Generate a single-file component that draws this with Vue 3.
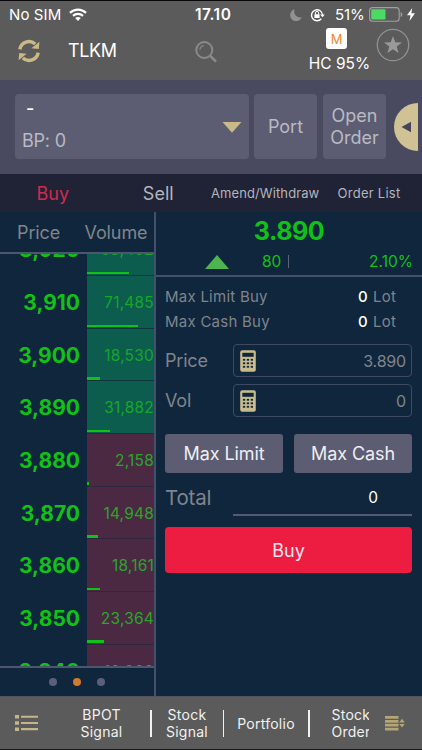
<template>
  <div class="app">
    <header class="top">
      <div class="status-bar">
        <span class="carrier">No SIM</span>
        <svg class="wifi" width="18" height="13" viewBox="0 0 18 13">
          <g fill="none" stroke="#fff" stroke-width="2.2">
            <path d="M1 4.9C5.5 .6 12.5 .6 17 4.9" />
            <path d="M4 7.9C6.8 5.2 11.2 5.2 14 7.9" />
          </g>
          <path d="M6.2 10.1C7.8 8.6 10.2 8.6 11.8 10.1L9 12.9Z" fill="#fff" />
        </svg>
        <span class="clock">17.10</span>
        <svg class="moon" width="12" height="12" viewBox="0 0 12 12">
          <path d="M4.6 .3A6 6 0 1 0 11.8 8.2A6 6 0 0 1 4.6 .3Z" fill="#929294" />
        </svg>
        <svg class="lock" width="15" height="14" viewBox="0 0 15 14">
          <path d="M11.3 10.7A5.5 5.5 0 1 1 12.5 7" fill="none" stroke="#fff" stroke-width="1.4" />
          <path d="M10.2 6.4H14.8L12.5 9.3Z" fill="#fff" />
          <rect x="4.4" y="6.2" width="5.2" height="3.8" rx=".5" fill="#fff" />
          <path d="M5.4 6.5V5A1.6 1.6 0 0 1 8.6 5V6.5" fill="none" stroke="#fff" />
        </svg>
        <span class="percent">51%</span>
        <svg class="battery" width="34" height="15" viewBox="0 0 34 15">
          <rect x=".6" y=".6" width="29.6" height="13.6" rx="3" fill="none" stroke="#a0a0a1" stroke-width="1.1" />
          <rect x="2.2" y="2.2" width="14.3" height="10.4" rx="1" fill="#4cd964" />
          <path d="M31.7 5V10Q33.4 9.5 33.4 7.5T31.7 5Z" fill="#a0a0a1" />
        </svg>
        <svg class="bolt" width="8" height="13" viewBox="0 0 8 13">
          <path d="M5.2 0L0 7.3H3.5L2.5 13L8 5.3H4.4Z" fill="#fff" />
        </svg>
      </div>

      <div class="toolbar">
        <svg class="refresh" width="24" height="24" viewBox="0 0 24 24">
          <g fill="none" stroke="#c8b987" stroke-width="3.4">
            <path d="M2.8 10.4A9.3 9.3 0 0 1 18.2 5" />
            <path d="M21.2 13.6A9.3 9.3 0 0 1 5.8 19" />
          </g>
          <path d="M22.4 2.8L21.8 10L14.4 9.2ZM1.6 21.2L2.2 14L9.6 14.8Z" fill="#c8b987" />
        </svg>
        <span class="ticker">TLKM</span>
        <svg class="search" width="24" height="24" viewBox="0 0 24 24">
          <circle cx="9.3" cy="9" r="8" fill="none" stroke="#8a8a8a" stroke-width="2" />
          <path d="M4.9 8.7A4.6 4.6 0 0 1 9 4.6" fill="none" stroke="#8a8a8a" stroke-width="1.3" />
          <path d="M15.3 15L21 20.6" stroke="#8a8a8a" stroke-width="2.6" />
        </svg>
        <div class="margin-info">
          <span class="badge">M</span>
          <span class="haircut">HC 95%</span>
        </div>
        <svg class="star" width="34" height="34" viewBox="0 0 34 34">
          <circle cx="17" cy="17" r="15.7" fill="none" stroke="#929292" stroke-width="1.3" />
          <path
            d="M17 8L19.3 14.3L26 14.5L20.7 18.6L22.6 25.1L17 21.3L11.4 25.1L13.3 18.6L8 14.5L14.7 14.3Z"
            fill="#999"
          />
        </svg>
      </div>
    </header>

    <section class="account">
      <div class="account-select">
        <span class="account-name">-</span>
        <span class="account-bp">BP: 0</span>
        <svg class="caret" width="20" height="11" viewBox="0 0 20 11">
          <path d="M.5 0H19.5L10 10.8Z" fill="#c8b987" />
        </svg>
      </div>
      <button class="account-btn">Port</button>
      <button class="account-btn">Open<br />Order</button>
      <svg class="drawer" width="24" height="48" viewBox="0 0 24 48">
        <path d="M24 0A24 24 0 0 0 24 48Z" fill="#d0c294" />
        <path d="M7.5 24L17 18.7V29.3Z" fill="#45465b" />
      </svg>
    </section>

    <nav class="tabs">
      <button
        v-for="tab in tabs"
        :key="tab.name"
        class="tab"
        :class="[tab.cls, { active: tab.name === activeTab }]"
        @click="activeTab = tab.name"
      >
        {{ tab.name }}
      </button>
    </nav>

    <main class="content">
      <section class="book">
        <div class="book-head">
          <span class="head-price">Price</span>
          <span class="head-volume">Volume</span>
        </div>
        <div class="book-list">
          <div v-for="row in rows" :key="row.price" class="book-row">
            <span class="row-price">{{ row.price }}</span>
            <div class="row-volume" :class="row.side">
              <span>{{ row.volume }}</span>
              <i class="bar" :style="{ width: row.bar + 'px' }"></i>
            </div>
          </div>
        </div>
        <div class="dots"><i></i><i class="on"></i><i></i></div>
      </section>

      <section class="order">
        <div class="quote">
          <div class="last">3.890</div>
          <div class="change">
            <svg class="up" width="24" height="14" viewBox="0 0 24 14">
              <path d="M12 0L24 14H0Z" fill="#4db452" />
            </svg>
            <span class="diff">80</span>
            <i class="sep"></i>
            <span class="pct">2.10%</span>
          </div>
        </div>

        <div class="form">
          <div v-for="l in limits" :key="l" class="limit">
            <span class="limit-label">{{ l }}</span>
            <span class="limit-value">0</span>
            <span class="limit-unit">Lot</span>
          </div>

          <div v-for="f in fields" :key="f.label" class="field">
            <label>{{ f.label }}</label>
            <div class="input">
              <svg width="16" height="22" viewBox="0 0 16 22">
                <rect x=".2" y=".3" width="15.6" height="21.4" rx="2" fill="#c8bc8c" />
                <rect x="2.3" y="2.8" width="11.4" height="4" fill="#10263d" />
                <g fill="#10263d">
                  <template v-for="y in 3" :key="y">
                    <rect
                      v-for="x in 3"
                      :key="x"
                      :x="x * 3.9 - 1"
                      :y="y * 3.5 + 5.4"
                      width="2.3"
                      height="1.8"
                    />
                  </template>
                </g>
              </svg>
              <span>{{ f.value }}</span>
            </div>
          </div>

          <div class="max-buttons">
            <button>Max Limit</button>
            <button>Max Cash</button>
          </div>

          <div class="total">
            <label>Total</label>
            <span>0</span>
          </div>

          <button class="buy">Buy</button>
        </div>
      </section>
    </main>

    <footer class="bottom">
      <svg class="menu" width="23" height="16" viewBox="0 0 23 16">
        <g fill="#c3b58c">
          <path d="M0 0H4V3.5H0ZM0 6.2H4V9.7H0ZM0 12.4H4V15.9H0Z" />
          <path d="M6 .7H23V2.8H6ZM6 6.9H23V9H6ZM6 13.1H23V15.2H6Z" />
        </g>
      </svg>
      <div class="links">
        <span class="link bpot">BPOT<br />Signal</span>
        <i class="divider"></i>
        <span class="link stock">Stock<br />Signal</span>
        <i class="divider"></i>
        <span class="link portfolio">Portfolio</span>
        <i class="divider"></i>
        <span class="link orders">Stock<br />Order</span>
      </div>
      <svg class="sort" width="20" height="15" viewBox="0 0 20 15">
        <path
          d="M0 0H13.5V2.8H0ZM0 3.9H13.5V6.7H0ZM0 7.8H13.5V10.6H0ZM0 11.7H13.5V14.5H0ZM14.2 6.4L17 2.8L19.8 6.4ZM14.2 8H19.8L17 11.6Z"
          fill="#b3a577"
        />
      </svg>
    </footer>
  </div>
</template>

<script setup>
import { ref } from "vue";

const activeTab = ref("Buy");

const tabs = [
  { name: "Buy", cls: "large" },
  { name: "Sell", cls: "large" },
  { name: "Amend/Withdraw", cls: "amend" },
  { name: "Order List", cls: "list" },
];

// order book, bar = width of the volume bar in px
const rows = [
  { price: "3,920", volume: "58,402", side: "ask", bar: 42 },
  { price: "3,910", volume: "71,485", side: "ask", bar: 50.5 },
  { price: "3,900", volume: "18,530", side: "ask", bar: 13 },
  { price: "3,890", volume: "31,882", side: "ask", bar: 22.5 },
  { price: "3,880", volume: "2,158", side: "bid", bar: 2 },
  { price: "3,870", volume: "14,948", side: "bid", bar: 11 },
  { price: "3,860", volume: "18,161", side: "bid", bar: 13 },
  { price: "3,850", volume: "23,364", side: "bid", bar: 16.5 },
  { price: "3,840", volume: "10,969", side: "bid", bar: 8 },
];

const limits = ["Max Limit Buy", "Max Cash Buy"];

const fields = [
  { label: "Price", value: "3.890" },
  { label: "Vol", value: "0" },
];
</script>

<style>
body {
  margin: 0;
  background: #10263d;
}
</style>

<style scoped>
* {
  box-sizing: border-box;
}
button {
  border: none;
  padding: 0;
  font-family: inherit;
  cursor: pointer;
}
svg {
  display: block;
  flex: none;
}
.app {
  width: 422px;
  height: 750px;
  display: flex;
  flex-direction: column;
  overflow: hidden;
  font-family: Inter, "Liberation Sans", sans-serif;
  background: #10263d;
  white-space: nowrap;
}

/* header */
.top {
  height: 80px;
  flex: none;
  background: #5b5b5b;
  border-top: 1px solid #080808;
  color: #fff;
}
.status-bar {
  height: 27px;
  display: flex;
  align-items: center;
  padding-left: 9px;
  font-size: 15px;
}
.carrier {
  width: 60px;
  letter-spacing: 0.1px;
}
.clock {
  width: 95px;
  margin-left: 108px;
  font-weight: 600;
  font-size: 15.5px;
  letter-spacing: 0.5px;
}
.lock {
  margin-left: 8px;
}
.percent {
  width: 34px;
  margin-left: 10px;
  letter-spacing: -0.1px;
}
.bolt {
  margin-left: 4px;
}
.toolbar {
  height: 52px;
  display: flex;
  align-items: flex-start;
  padding-left: 17px;
}
.refresh {
  margin-top: 11px;
}
.ticker {
  width: 127px;
  margin: 12px 0 0 27px;
  font-size: 18px;
  line-height: 22px;
  letter-spacing: -0.4px;
}
.search {
  margin-top: 13px;
}
.margin-info {
  width: 64px;
  margin-left: 88.5px;
  display: flex;
  flex-direction: column;
  align-items: center;
}
.badge {
  width: 21px;
  height: 21px;
  margin-left: -6px;
  border-radius: 3px;
  background: #fff;
  color: #f08a35;
  font-size: 13px;
  line-height: 22px;
  text-align: center;
}
.haircut {
  margin-top: 5px;
  font-size: 15.5px;
  line-height: 19px;
}
.star {
  margin-left: 4px;
}

/* account */
.account {
  height: 94px;
  flex: none;
  display: flex;
  padding: 14px 0 0 15px;
  background: #494a60;
  color: #b9bac3;
}
.account-select {
  width: 234px;
  height: 65px;
  position: relative;
  display: flex;
  flex-direction: column;
  padding: 4px 0 0 7px;
  border-radius: 4px;
  background: #5c5d72;
}
.account-name {
  padding-left: 4px;
  color: #fff;
  font-size: 18px;
  font-weight: 500;
  line-height: 21px;
}
.account-bp {
  margin-top: 11px;
  font-size: 18px;
  line-height: 22px;
  letter-spacing: -0.2px;
}
.caret {
  position: absolute;
  right: 7px;
  top: 28px;
}
.account-btn {
  width: 63px;
  height: 65px;
  margin-left: 6px;
  border-radius: 4px;
  background: #5c5d72;
  color: #b9bac3;
  font-size: 18px;
  line-height: 22px;
}
.account-btn:first-of-type {
  margin-left: 5px;
}
.drawer {
  margin: 9px 0 0 8px;
}

/* tabs */
.tabs {
  height: 38px;
  flex: none;
  display: flex;
  background: #202235;
}
.tab {
  background: none;
  color: #b4b5bd;
}
.tab.large {
  width: 105.5px;
  font-size: 18px;
}
.tab.amend {
  width: 106px;
  padding-right: 2px;
  font-size: 13px;
  letter-spacing: 0.1px;
}
.tab.list {
  width: 104px;
  font-size: 13px;
  letter-spacing: 0.25px;
}
.tab.active {
  color: #d02a4e;
}

.content {
  flex: 1;
  min-height: 0;
  display: flex;
}

/* order book */
.book {
  width: 156px;
  display: flex;
  flex-direction: column;
  border-right: 2px solid #44506a;
}
.book-head {
  height: 42px;
  flex: none;
  display: flex;
  align-items: center;
  padding-left: 17px;
  border-bottom: 2px solid #4d566f;
  color: #7f858c;
  font-size: 18px;
  letter-spacing: -0.1px;
}
.head-price {
  width: 67.5px;
}
.book-list {
  height: 412px;
  flex: none;
  overflow: hidden;
}
.book-row {
  height: 52.65px;
  display: flex;
}
.book-row:first-child {
  margin-top: -30.6px;
}
.row-price {
  width: 87px;
  padding-right: 7px;
  color: #0fc215;
  font-size: 21px;
  font-weight: 700;
  line-height: 53.4px;
  text-align: right;
}
.row-volume {
  flex: 1;
  position: relative;
  border-bottom: 1px solid #113540;
  color: #16a62a;
  font-size: 15.5px;
  line-height: 53.4px;
  letter-spacing: 0.2px;
  text-align: right;
}
.row-volume.ask {
  background: #0c5d4e;
}
.row-volume.bid {
  background: #4b2943;
  border-bottom-color: #2f2740;
  color: #2ba42b;
}
.bar {
  position: absolute;
  left: 0;
  bottom: 0.6px;
  height: 2.6px;
  background: #0fc215;
}
.dots {
  flex: 1;
  display: flex;
  justify-content: center;
  align-items: center;
  gap: 16px;
  border-top: 2px solid #4d566f;
}
.dots i {
  width: 8px;
  height: 8px;
  border-radius: 50%;
  background: #5c5f79;
}
.dots .on {
  background: #cf7a2c;
}

/* order form */
.order {
  flex: 1;
  min-width: 0;
}
.quote {
  height: 65px;
  border-bottom: 2px solid #44506a;
  color: #0fc215;
}
.last {
  height: 39px;
  font-size: 25px;
  font-weight: 700;
  line-height: 39px;
  letter-spacing: -0.4px;
  text-align: center;
}
.change {
  height: 21px;
  display: flex;
  align-items: center;
  padding: 0 9px 0 49px;
  font-size: 15.5px;
}
.diff {
  width: 26px;
  margin-left: 33px;
}
.sep {
  width: 1px;
  height: 13px;
  background: #5a6478;
}
.pct {
  margin-left: auto;
}
.form {
  padding: 7px 10px 0 9px;
  color: #7f858c;
}
.limit {
  height: 25px;
  display: flex;
  align-items: center;
  font-size: 15px;
  letter-spacing: 0.25px;
}
.limit-label {
  width: 193px;
}
.limit-value {
  width: 15px;
  color: #fff;
  font-weight: 500;
}
.field {
  height: 33px;
  display: flex;
  align-items: center;
  margin-top: 10px;
  font-size: 18px;
  letter-spacing: -0.2px;
}
.field + .field {
  margin-top: 7px;
}
.field label {
  width: 68px;
}
.input {
  flex: 1;
  height: 33px;
  display: flex;
  align-items: center;
  justify-content: space-between;
  padding: 0 5px 0 6px;
  border: 1px solid #3f4962;
  border-radius: 4px;
  font-size: 16px;
}
.max-buttons {
  display: flex;
  gap: 11px;
  margin-top: 17px;
}
.max-buttons button {
  flex: 1;
  height: 39px;
  border-radius: 3px;
  background: #5c5d72;
  color: #eeeef2;
  font-size: 18px;
  letter-spacing: -0.1px;
}
.total {
  height: 43px;
  display: flex;
}
.total label {
  width: 68px;
  font-size: 20.5px;
  line-height: 50px;
  letter-spacing: -0.2px;
}
.total span {
  flex: 1;
  padding-right: 34px;
  border-bottom: 2px solid #555a74;
  color: #fff;
  font-size: 15.5px;
  line-height: 49px;
  text-align: right;
}
.buy {
  width: 100%;
  height: 46px;
  margin-top: 11px;
  border-radius: 4px;
  background: #ed1d42;
  color: #f6e5ed;
  font-size: 18px;
}

/* footer */
.bottom {
  height: 54px;
  flex: none;
  display: flex;
  align-items: center;
  padding-left: 15px;
  border-top: 1px solid #54535c;
  border-bottom: 1px solid #181818;
  background: #5b5b5b;
  color: #f1f1f1;
}
.links {
  width: 331px;
  display: flex;
  align-items: center;
  overflow: hidden;
  font-size: 14px;
  line-height: 17px;
  letter-spacing: 0.25px;
  text-align: center;
}
.link {
  flex: none;
}
.bpot {
  width: 112px;
  padding-left: 15px;
}
.stock {
  width: 71px;
}
.portfolio {
  width: 84px;
}
.orders {
  width: 60px;
  margin-left: 22px;
  text-align: left;
}
.divider {
  width: 1.5px;
  height: 27px;
  flex: none;
  background: #f1f1f1;
}
.sort {
  margin-left: 16px;
}
</style>
